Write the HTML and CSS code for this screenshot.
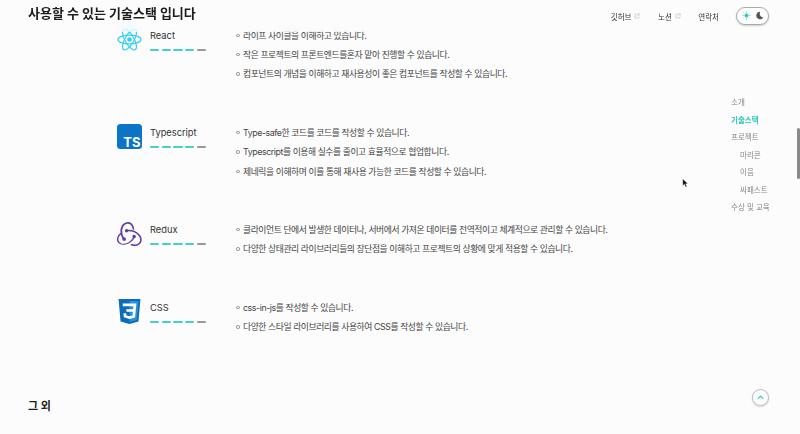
FILE: index.html
```html
<!DOCTYPE html>
<html lang="ko">
<head>
  <meta charset="UTF-8" />
  <meta name="viewport" content="width=device-width, initial-scale=1.0" />
  <title>기술스택</title>
  <link rel="stylesheet" href="styles.css">
</head>
<body>

  <header class="top-bar">
    <h1 class="top-title">사용할 수 있는 기술스택 입니다</h1>
    <nav class="top-nav">
      <a href="#">깃허브
        <svg class="ext" viewBox="0 0 12 12"><path d="M5 2H2v8h8V7M7 1.500h3.500V5M10.500 1.500 5.500 6.500"/></svg>
      </a>
      <a href="#">노션
        <svg class="ext" viewBox="0 0 12 12"><path d="M5 2H2v8h8V7M7 1.500h3.500V5M10.500 1.500 5.500 6.500"/></svg>
      </a>
      <a href="#">연락처</a>
    </nav>
    <div class="theme-toggle">
      <svg class="sun" viewBox="0 0 12 12">
        <circle cx="6" cy="6" r="2.200"/>
        <path d="M6 .3v2M6 9.700v2M.3 6h2M9.700 6h2M2 2l1.300 1.300M8.700 8.700 10 10M2 10l1.300-1.300M8.700 3.300 10 2"/>
      </svg>
      <svg class="moon" viewBox="0 0 12 12"><path d="M7 1a5 5 0 1 0 4 7.500A5 5 0 0 1 7 1z"/></svg>
    </div>
  </header>

  <main class="content">
    <section class="skills">

      <div class="skill">
        <svg class="skill-icon" viewBox="-13.500 -13.500 27 27">
          <g class="react-orbits">
            <ellipse rx="12.500" ry="4.800"/>
            <ellipse rx="12.500" ry="4.800" transform="rotate(60)"/>
            <ellipse rx="12.500" ry="4.800" transform="rotate(120)"/>
          </g>
          <circle class="react-core" r="2.500"/>
        </svg>
        <div class="skill-head">
          <div class="skill-name">React</div>
          <div class="level"><i></i><i></i><i></i><i></i><i class="off"></i></div>
        </div>
        <ul class="skill-list">
          <li>라이프 사이클을 이해하고 있습니다.</li>
          <li>작은 프로젝트의 프론트엔드를혼자 맡아 진행할 수 있습니다.</li>
          <li>컴포넌트의 개념을 이해하고 재사용성이 좋은 컴포넌트를 작성할 수 있습니다.</li>
        </ul>
      </div>

      <div class="skill">
        <svg class="skill-icon" viewBox="0 0 25 25">
          <rect width="25" height="25" rx="3.500" fill="#0b74c6"/>
          <text class="ts-label" x="23.500" y="23" text-anchor="end">TS</text>
        </svg>
        <div class="skill-head">
          <div class="skill-name">Typescript</div>
          <div class="level"><i></i><i></i><i></i><i></i><i class="off"></i></div>
        </div>
        <ul class="skill-list">
          <li>Type-safe한 코드를 코드를 작성할 수 있습니다.</li>
          <li>Typescript를 이용해 실수를 줄이고 효율적으로 협업합니다.</li>
          <li>제네릭을 이해하며 이를 통해 재사용 가능한 코드를 작성할 수 있습니다.</li>
        </ul>
      </div>

      <div class="skill">
        <svg class="skill-icon" viewBox="0 0 24 24">
          <path class="redux-logo" d="M16.634 16.504c.87-.075 1.543-.84 1.5-1.754-.047-.914-.796-1.648-1.709-1.648h-.061a1.710 1.710 0 0 0-1.648 1.769c.03.479.226.869.494 1.153-1.048 2.038-2.621 3.536-5.005 4.795-1.603.838-3.296 1.154-4.944.93-1.378-.195-2.456-.81-3.116-1.799-.988-1.499-1.078-3.116-.255-4.734.6-1.170 1.499-2.023 2.099-2.443a9.960 9.960 0 0 1-.42-1.543C-.868 14.408-.379 18.752.75 20.400c.989 1.499 3.056 2.443 5.335 2.443.6 0 1.230-.045 1.860-.225 3.897-.75 6.849-3.086 8.689-6.114zm5.004-3.530c-2.456-2.892-6.098-4.480-10.277-4.480h-.527c-.3-.555-.885-.93-1.514-.93h-.061c-.914.03-1.648.81-1.618 1.753.03.9.81 1.648 1.708 1.648h.075a1.688 1.688 0 0 0 1.500-1.049h.57c2.471 0 4.800.719 6.913 2.112 1.615 1.064 2.773 2.457 3.418 4.125.555 1.348.525 2.667-.06 3.786-.9 1.708-2.413 2.642-4.405 2.642-1.288 0-2.512-.39-3.146-.675-.354.3-.99.81-1.440 1.124 1.378.63 2.787.99 4.140.99 3.086 0 5.365-1.708 6.234-3.416.93-1.873.87-5.097-1.513-7.630zM5.205 17.480c.03.9.81 1.648 1.708 1.648h.06a1.710 1.710 0 0 0 1.649-1.768c-.03-.9-.81-1.648-1.708-1.648h-.061c-.06 0-.15 0-.225.03-1.230-2.053-1.738-4.286-1.558-6.683.12-1.798.72-3.356 1.768-4.645.87-1.108 2.553-1.648 3.686-1.678 3.176-.06 4.525 3.896 4.615 5.484.39.09 1.048.3 1.498.45C16.478 3.320 13.352.86 10.360.86c-2.810 0-5.395 2.030-6.428 5.036-1.438 4.015-.495 7.880 1.258 10.910-.15.21-.24.54-.225.824z"/>
        </svg>
        <div class="skill-head">
          <div class="skill-name">Redux</div>
          <div class="level"><i></i><i></i><i></i><i></i><i class="off"></i></div>
        </div>
        <ul class="skill-list">
          <li>클라이언트 단에서 발생한 데이터나, 서버에서 가져온 데이터를 전역적이고 체계적으로 관리할 수 있습니다.</li>
          <li>다양한 상태관리 라이브러리들의 장단점을 이해하고 프로젝트의 상황에 맞게 적용할 수 있습니다.</li>
        </ul>
      </div>

      <div class="skill">
        <svg class="skill-icon" viewBox="0 0 24 24">
          <path d="M1.500 0h21l-1.910 21.563L11.977 24l-8.564-2.438z" fill="#0b6cb8"/>
          <path d="M12 1.800h8.600l-1.600 18.300-7 1.900z" fill="#2a8fdc"/>
          <path d="M18.590 4.413 5.410 4.410l.213 2.622 10.125.002-.255 2.716h-6.640l.24 2.573h6.182l-.366 3.523-2.910.804-2.956-.81-.188-2.110h-2.610l.29 3.855L12 19.288l5.373-1.530z" fill="#fff"/>
        </svg>
        <div class="skill-head">
          <div class="skill-name">CSS</div>
          <div class="level"><i></i><i></i><i></i><i></i><i class="off"></i></div>
        </div>
        <ul class="skill-list">
          <li>css-in-js를 작성할 수 있습니다.</li>
          <li>다양한 스타일 라이브러리를 사용하여 CSS를 작성할 수 있습니다.</li>
        </ul>
      </div>

    </section>

    <h2 class="section-title">그 외</h2>
  </main>

  <aside class="toc">
    <a href="#">소개</a>
    <a href="#" class="active">기술스택</a>
    <a href="#">프로젝트</a>
    <a href="#" class="sub">마리콘</a>
    <a href="#" class="sub">이음</a>
    <a href="#" class="sub">싸패스트</a>
    <a href="#">수상 및 교육</a>
  </aside>

  <button class="to-top" type="button">
    <svg viewBox="0 0 10 10"><path d="M2 6.300 5 3.700l3 2.600"/></svg>
  </button>

  <div class="scroll-thumb"></div>

  <svg class="cursor" viewBox="0 0 10 14"><path d="M1 1v10l2.500-2.200L5.300 13l1.700-.8-1.700-4H8.500z"/></svg>

</body>
</html>
```

FILE: styles.css
```css
html, body {
  height: 100%;
}

body {
  margin: 0;
  height: 434px;
  overflow: hidden;
  font-family: Inter, "Noto Sans CJK KR", sans-serif;
  background-color: #fcfcfc;
  color: #333;
}

a {
  color: inherit;
  text-decoration: none;
}

/* header */
.top-bar {
  position: fixed;
  top: 0;
  left: 0;
  right: 0;
  height: 32px;
  display: flex;
  align-items: center;
  padding: 0 31px 0 28px;
  background-color: rgba(252, 252, 252, 0.55);
  backdrop-filter: blur(4px);
  z-index: 5;
}

.top-title {
  margin: 0 auto 8px 0;
  font-size: 13px;
  font-weight: 700;
  color: #1c1c1c;
}

.top-nav {
  display: flex;
  gap: 17.500px;
  font-size: 7.500px;
  color: #333;
}

.top-nav a {
  display: flex;
  align-items: center;
  gap: 3px;
}

.ext {
  width: 6px;
  height: 6px;
  fill: none;
  stroke: #aaa;
  stroke-width: 1;
}

.theme-toggle {
  display: flex;
  align-items: center;
  justify-content: space-between;
  box-sizing: border-box;
  width: 33px;
  height: 18px;
  margin-left: 17px;
  margin-bottom: 1px;
  padding: 0 4px 0 5px;
  border: 1px solid #aaa;
  border-radius: 9px;
  background-color: #fff;
  box-shadow: 0 1px 2px rgba(0, 0, 0, 0.2);
}

.sun {
  width: 9px;
  height: 9px;
  fill: #2cc5b8;
  stroke: #2cc5b8;
  stroke-width: 0.800;
}

.moon {
  width: 9px;
  height: 9px;
  fill: #555;
}

/* skills */
.content {
  padding: 25.500px 0 0 28px;
}

.skills {
  display: flex;
  flex-direction: column;
  gap: 39px;
  padding-left: 88.500px;
}

.skill {
  display: flex;
  align-items: flex-start;
}

.skill-icon {
  flex: none;
  width: 25px;
  height: 25px;
  margin-top: 1.500px;
}

.react-orbits {
  fill: none;
  stroke: #35cdf5;
  stroke-width: 1.300;
}

.react-core {
  fill: #35cdf5;
}

.ts-label {
  font-family: Inter, sans-serif;
  font-size: 13px;
  font-weight: 700;
  fill: #fff;
}

.redux-logo {
  fill: #5f3dab;
}

.skill-head {
  flex: none;
  width: 94.500px;
  padding-left: 8.500px;
  box-sizing: border-box;
}

.skill-name {
  font-size: 9.300px;
  line-height: 19px;
  color: #333;
}

.level {
  display: flex;
  gap: 2.500px;
  width: 56px;
  margin-top: 4px;
}

.level i {
  flex: 1;
  height: 2.500px;
  border-radius: 1px;
  background-color: #43d1c6;
}

.level i.off {
  background-color: #999;
}

.skill-list {
  margin: 0;
  padding: 0;
  list-style: none;
}

.skill-list li {
  position: relative;
  padding-left: 7px;
  font-size: 8.800px;
  letter-spacing: -0.42px;
  line-height: 19.400px;
  color: #444;
  white-space: nowrap;
}

.skill-list li::before {
  content: "";
  position: absolute;
  left: 0;
  top: 8px;
  width: 3.500px;
  height: 3.500px;
  border: 1px solid #888;
  border-radius: 50%;
  box-sizing: border-box;
}

.section-title {
  margin: 60px 0 0;
  font-size: 11px;
  font-weight: 700;
  line-height: 18px;
  color: #1c1c1c;
}

/* side toc */
.toc {
  position: fixed;
  left: 731px;
  top: 94px;
  display: flex;
  flex-direction: column;
  font-size: 7.500px;
  line-height: 17.500px;
  color: #888;
}

.toc .active {
  color: #2cc5b8;
  font-weight: 700;
}

.toc .sub {
  padding-left: 9px;
}

.to-top {
  position: fixed;
  left: 752px;
  top: 389px;
  display: flex;
  align-items: center;
  justify-content: center;
  width: 17px;
  height: 17px;
  padding: 0;
  border: 1px solid #bbb;
  border-radius: 50%;
  background-color: #fdfdfd;
  box-shadow: 0 1px 2px rgba(0, 0, 0, 0.15);
}

.to-top svg {
  width: 9px;
  height: 9px;
  fill: none;
  stroke: #2cc5b8;
  stroke-width: 1.200;
}

.scroll-thumb {
  position: fixed;
  right: 0;
  top: 128px;
  width: 3px;
  height: 51px;
  border-radius: 2px;
  background-color: #8a8a8a;
}

.cursor {
  position: fixed;
  left: 682px;
  top: 178px;
  width: 7px;
  height: 10px;
  fill: #111;
  stroke: #fff;
  stroke-width: 0.600;
}
```
